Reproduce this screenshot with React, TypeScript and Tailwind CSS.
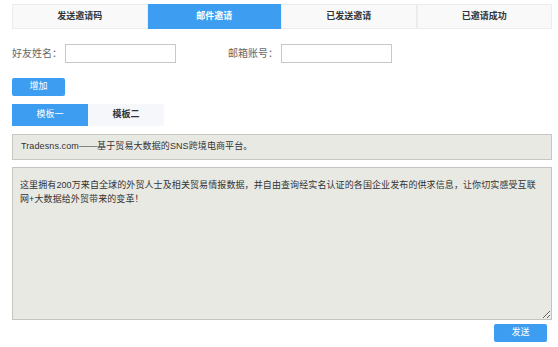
import React from "react";

const tabs = ["发送邀请码", "邮件邀请", "已发送邀请", "已邀请成功"];

const font = { fontFamily: '"Liberation Sans", "Noto Sans CJK SC", sans-serif' };

export default function App() {
  const active = 1;
  const body =
    "这里拥有200万来自全球的外贸人士及相关贸易情报数据，并自由查询经实名认证的各国企业发布的供求信息，让你切实感受互联\n网+大数据给外贸带来的变革！";

  return (
    <div
      className="w-[558px] h-[347px] bg-white pl-3 pr-[6px] pt-1 text-[#333]"
      style={font}
    >
      {/* top tabs */}
      <div className="flex h-[25px]">
        {tabs.map((t, i) => (
          <div
            key={t}
            className={
              i === active
                ? "flex-1 flex items-center justify-center bg-[#3d9ef1] text-white text-[9px] font-bold"
                : "flex-1 flex items-center justify-center bg-[#f9f9f9] border border-[#ececec] text-[#333] text-[9px] font-bold"
            }
          >
            {t}
          </div>
        ))}
      </div>

      {/* form row */}
      <div className="flex items-center mt-[15px] h-[19px] text-[10px] text-[#666]">
        <span className="w-[53px]">好友姓名：</span>
        <input className="w-[111px] h-[19px] border border-[#c8c8c8] bg-white outline-none" />
        <span className="ml-[52px] w-[53px]">邮箱账号：</span>
        <input className="w-[111px] h-[19px] border border-[#c8c8c8] bg-white outline-none" />
      </div>

      <button className="mt-[15px] w-[53px] h-[18px] rounded-[2px] bg-[#3d9ef1] text-white text-[9px] flex items-center justify-center">
        增加
      </button>

      {/* template tabs */}
      <div className="flex mt-[8px] h-[22px] text-[9px]">
        <div className="w-[76px] flex items-center justify-center bg-[#3d9ef1] text-white">
          模板一
        </div>
        <div className="w-[76px] flex items-center justify-center bg-[#f5f7fa] text-[#333] font-bold">
          模板二
        </div>
      </div>

      {/* subject */}
      <div className="mt-[8px] h-[26px] border border-[#c6c6c2] bg-[#e9e9e4] flex items-center pl-2 text-[9px] tracking-[0.1px] text-[#333]">
        Tradesns.com——基于贸易大数据的SNS跨境电商平台。
      </div>

      {/* body */}
      <textarea
        readOnly
        defaultValue={body}
        className="block mt-[7px] w-full h-[153px] border border-[#c4c4c0] bg-[#e9e9e4] px-[7px] pt-[10px] text-[9px] tracking-[0.1px] leading-[14px] text-[#333] outline-none resize"
        style={font}
      />

      <div className="flex justify-end pr-[5px] mt-[4px]">
        <button className="w-[53px] h-[18px] rounded-[2px] bg-[#3d9ef1] text-white text-[9px] flex items-center justify-center">
          发送
        </button>
      </div>
    </div>
  );
}
